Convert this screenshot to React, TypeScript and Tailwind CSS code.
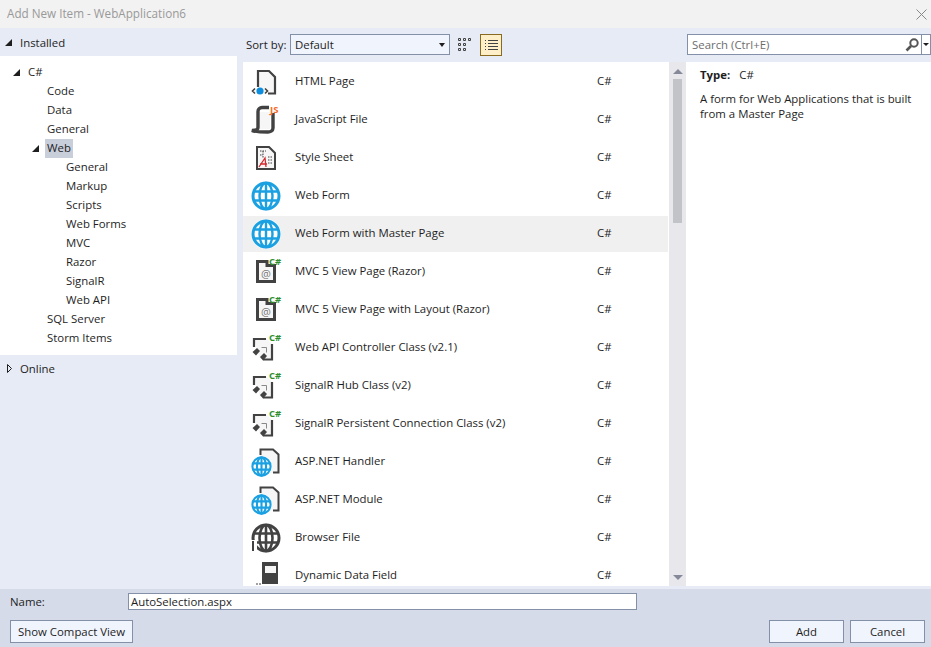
const font = "font-['Open_Sans','Liberation_Sans',sans-serif]";

function GlobeShape() {
  return (
    <>
      <circle cx="15" cy="15" r="15" fill="#fff" stroke="none" />
      <circle cx="15" cy="15" r="13" fill="#fff" strokeWidth="3" />
      <ellipse cx="15" cy="15" rx="6.5" ry="13" />
      <path d="M15 2v26M2.500 10.500h25M2.500 19.500h25" />
    </>
  );
}

function Globe() {
  return (
    <svg width="30" height="30" viewBox="0 0 30 30" fill="none" stroke="#1ba1e2" strokeWidth="2.400">
      <GlobeShape />
    </svg>
  );
}

function CSharp() {
  return (
    <text x="18" y="8" fontSize="9.500" fontWeight="700" fill="#2f8f2f" fontFamily="Open Sans, sans-serif">
      C#
    </text>
  );
}

function ItemIcon({ kind }: { kind: string }) {
  if (kind === "web") return <Globe />;
  if (kind === "browser")
    return (
      <svg width="30" height="30" viewBox="0 0 30 30" fill="none" stroke="#424242" strokeWidth="2.600">
        <GlobeShape />
        <path d="M0 17h6v13H0z" fill="#fff" stroke="none" />
        <path d="M2 18v10" strokeWidth="2" />
      </svg>
    );
  if (kind === "html")
    return (
      <svg width="30" height="30" viewBox="0 0 30 30">
        <path d="M7 4h11l6 6v16H7z" fill="#f6f6f6" />
        <path d="M7 20V4h11l6 6v16.500h-7" fill="none" stroke="#424242" strokeWidth="2.200" />
        <path d="M4 21.500 1.500 24 4 26.500M14 21.500l2.500 2.500-2.500 2.500" fill="none" stroke="#424242" strokeWidth="1.600" />
        <circle cx="9" cy="24" r="3.600" fill="#0d8ddb" />
      </svg>
    );
  if (kind === "js")
    return (
      <svg width="34" height="30" viewBox="0 0 34 30" className="overflow-visible">
        <path d="M7 7h12v17H7z" fill="#f6f6f6" />
        <path
          d="M18 2.500H11a4 4 0 0 0-4 4v16c0 2-2 3-6 3 3 1.500 14 1.500 16 1.500s5-1 5-4V8"
          fill="none"
          stroke="#424242"
          strokeWidth="3.400"
        />
        <text x="19" y="8" fontSize="9.500" fontWeight="700" fill="#f26c2a" fontFamily="Open Sans, sans-serif">
          JS
        </text>
      </svg>
    );
  if (kind === "css")
    return (
      <svg width="30" height="30" viewBox="0 0 30 30">
        <path d="M6 4h12l6 6v16H6z" fill="#f6f6f6" stroke="#424242" strokeWidth="2" />
        <path d="M9 8h6M12 8v7M9 12h3M17 14h5M17 17h5M17 20h5" stroke="#424242" strokeWidth="1" strokeDasharray="1.500 1" />
        <path d="M8 24 14 15l1 9M9 21h7" fill="none" stroke="#d4272e" strokeWidth="1.300" />
      </svg>
    );
  if (kind === "razor")
    return (
      <svg width="34" height="30" viewBox="0 0 34 30" className="overflow-visible">
        <path d="M6.500 4.500H16v4h7.500v16h-17z" fill="#f6f6f6" stroke="#424242" strokeWidth="3" />
        <text x="10" y="21" fontSize="11" fill="#777" fontFamily="Open Sans, sans-serif">
          @
        </text>
        <CSharp />
      </svg>
    );
  if (kind === "class")
    return (
      <svg width="34" height="30" viewBox="0 0 34 30" className="overflow-visible">
        <path d="M3 6h13l5 5v15H9" fill="#f6f6f6" />
        <path d="M3 14V6h12M21 11v15.500H12" fill="none" stroke="#424242" strokeWidth="2.200" />
        <path d="M1.500 19 6 15l3 3-4 4.500zM9 24l4-4 3 3-4 4.500z" fill="#424242" />
        <path d="M10.500 14.500h5v5" fill="none" stroke="#888" strokeWidth="1" />
        <CSharp />
      </svg>
    );
  if (kind === "handler")
    return (
      <svg width="30" height="30" viewBox="0 0 30 30">
        <path d="M9 2h13l5 5v19H9z" fill="#f6f6f6" />
        <path d="M9.500 8V2.500H22l5.500 5V25.500H22" fill="none" stroke="#424242" strokeWidth="2" />
        <svg x="0" y="9" width="21" height="21" viewBox="0 0 30 30" fill="none" stroke="#1ba1e2" strokeWidth="3">
          <GlobeShape />
        </svg>
      </svg>
    );
  return (
    <svg width="30" height="30" viewBox="0 0 30 30">
      <path d="M11 1h16v22H11z" fill="#424242" />
      <path d="M14 5h11v7H14z" fill="#f6f6f6" />
      <path d="M5 23h6" stroke="#424242" strokeWidth="1" strokeDasharray="2 1" />
    </svg>
  );
}

const items = [
  ["HTML Page", "html"],
  ["JavaScript File", "js"],
  ["Style Sheet", "css"],
  ["Web Form", "web"],
  ["Web Form with Master Page", "web"],
  ["MVC 5 View Page (Razor)", "razor"],
  ["MVC 5 View Page with Layout (Razor)", "razor"],
  ["Web API Controller Class (v2.1)", "class"],
  ["SignalR Hub Class (v2)", "class"],
  ["SignalR Persistent Connection Class (v2)", "class"],
  ["ASP.NET Handler", "handler"],
  ["ASP.NET Module", "handler"],
  ["Browser File", "browser"],
  ["Dynamic Data Field", "data"],
];

const tree = [
  ["C#", 1, true],
  ["Code", 2, false],
  ["Data", 2, false],
  ["General", 2, false],
  ["Web", 2, true],
  ["General", 3, false],
  ["Markup", 3, false],
  ["Scripts", 3, false],
  ["Web Forms", 3, false],
  ["MVC", 3, false],
  ["Razor", 3, false],
  ["SignalR", 3, false],
  ["Web API", 3, false],
  ["SQL Server", 2, false],
  ["Storm Items", 2, false],
] as const;

function Arrow() {
  return <span className="w-0 h-0 border-l-[7px] border-l-transparent border-b-[7px] border-b-[#1e1e1e]" />;
}

export default function App() {
  return (
    <div className={`w-[931px] h-[647px] overflow-hidden flex flex-col bg-[#d6dbe9] text-[11.4px] text-[#1e1e1e] ${font}`}>
      <div className="h-[28px] bg-[#f2f2f2] flex items-center justify-between pl-[7px] pr-[4px] text-[11.7px] text-[#999]">
        <span>Add New Item - WebApplication6</span>
        <svg width="11" height="11" viewBox="0 0 11 11" stroke="#888" strokeWidth="1">
          <path d="M.5.5l10 10M10.500.5l-10 10" />
        </svg>
      </div>

      <div className="flex-1 min-h-0 flex bg-[#e6ebf5]">
        <div className="w-[237px] flex flex-col">
          <div className="h-[28px] flex items-center pl-[5px] gap-[8px]">
            <Arrow />
            <span className="pt-[1px]">Installed</span>
          </div>
          <div className="h-[299px] bg-white pt-[7px]">
            {tree.map(([label, level, open], i) => (
              <div key={i} className="h-[19px] flex items-center">
                <span className="flex justify-end shrink-0" style={{ width: level * 19 + 1 }}>
                  {open && <Arrow />}
                </span>
                <span className={`px-[2px] h-[19px] leading-[17px] ml-[6px] ${label === "Web" ? "bg-[#c9cedb]" : ""}`}>{label}</span>
              </div>
            ))}
          </div>
          <div className="h-[27px] flex items-center pl-[7px] gap-[8px]">
            <svg width="5" height="9" viewBox="0 0 5 9" fill="none" stroke="#1e1e1e" strokeWidth="1">
              <path d="M.5.500v8l4-4z" />
            </svg>
            <span>Online</span>
          </div>
        </div>

        <div className="flex-1 min-w-0 flex flex-col">
          <div className="h-[34px] flex items-center justify-between pl-[9px] pb-[1px]">
            <div className="flex items-center">
              <span className="w-[44px] pt-[1px]">Sort by:</span>
              <div className="w-[160px] h-[21px] border border-[#8490a8] bg-[#f0f4fc] flex items-center justify-between pl-[4px] pr-[4px]">
                <span className="pt-[1px]">Default</span>
                <span className="w-0 h-0 border-x-[3.5px] border-x-transparent border-t-[4px] border-t-[#1e1e1e]" />
              </div>
              <div className="w-[30px] h-[22px] flex items-center justify-center">
                <svg width="14" height="14" viewBox="0 0 14 14" fill="none" stroke="#424242" strokeWidth="1">
                  <path d="M.5.5h2v2h-2zM5.500.5h2v2h-2zM10.500.5h2v2h-2zM.5 5.500h2v2h-2zM5.500 5.500h2v2h-2zM.5 10.500h2v2h-2zM5.500 10.500h2v2h-2z" />
                </svg>
              </div>
              <div className="w-[22px] h-[22px] bg-[#ffefc9] border border-[#8a6a1e] flex items-center justify-center">
                <svg width="13" height="12" viewBox="0 0 13 12" fill="none" stroke="#424242" strokeWidth="1">
                  <path d="M0 1.500h1M3 1.500h10M0 4.500h1M3 4.500h10M0 7.500h1M3 7.500h10M0 10.500h1M3 10.500h10" />
                </svg>
              </div>
            </div>
            <div className="w-[244px] h-[21px] border border-[#8490a8] bg-white flex items-center pl-[4px] text-[#6d6d6d]">
              <span className="flex-1 pt-[1px]">Search (Ctrl+E)</span>
              <svg width="14" height="14" viewBox="0 0 14 14" fill="none" className="mr-[2px]">
                <circle cx="9" cy="5" r="3.700" stroke="#555" strokeWidth="2" />
                <path d="M6 8l-4.500 4.500" stroke="#555" strokeWidth="2.600" />
              </svg>
              <span className="w-[9px] h-full border-l border-[#8490a8] flex items-center justify-center">
                <span className="w-0 h-0 border-x-[3px] border-x-transparent border-t-[3px] border-t-[#1e1e1e]" />
              </span>
            </div>
          </div>

          <div className="flex-1 min-h-0 flex bg-white ml-[6px]">
            <div className="w-[425px] shrink-0 h-full overflow-hidden pt-[2px]">
              {items.map(([name, kind], i) => (
                <div key={i} className={`h-[36px] mb-[2px] flex items-center ${i === 4 ? "bg-[#f0f0f0]" : ""}`}>
                  <span className="w-[52px] pl-[8px] shrink-0 flex items-center">
                    <ItemIcon kind={kind} />
                  </span>
                  <span className="flex-1 pb-[2px]">{name}</span>
                  <span className="w-[71px] pb-[2px]">C#</span>
                </div>
              ))}
            </div>
            <div className="w-[17px] shrink-0 ml-[1px] h-full bg-[#e8e8ec] flex flex-col items-center pt-[7px] pb-[6px]">
              <span className="w-0 h-0 border-x-[5px] border-x-transparent border-b-[5px] border-b-[#868999]" />
              <div className="w-[9px] h-[144px] bg-[#c2c3c9] mt-[5px] flex-none" />
              <span className="mt-auto w-0 h-0 border-x-[5px] border-x-transparent border-t-[5px] border-t-[#868999]" />
            </div>
            <div className="flex-1 ml-[2px] pl-[12px] pt-[4px]">
              <div className="h-[18px] flex items-center gap-[9px]">
                <span className="font-bold">Type:</span>
                <span>C#</span>
              </div>
              <p className="mt-[7px] leading-[15px] w-[225px]">A form for Web Applications that is built from a Master Page</p>
            </div>
          </div>
        </div>
      </div>

      <div className="h-[61px] shrink-0 border-t-[3px] border-t-[#e6ebf5] bg-[#d6dbe9] px-[10px]">
        <div className="flex items-center h-[25px]">
          <span className="w-[118px] pt-[1px]">Name:</span>
          <div className="w-[509px] h-[17px] bg-white border border-[#8490a8] flex items-center pl-[2px] pt-[1px]">AutoSelection.aspx</div>
        </div>
        <div className="flex items-center justify-between mt-[6px]">
          <button className="w-[123px] h-[23px] border border-[#8490a8] bg-[#f0f4fc]">Show Compact View</button>
          <div className="flex gap-[6px] mr-[-4px]">
            <button className="w-[75px] h-[23px] border border-[#8490a8] bg-[#f0f4fc]">Add</button>
            <button className="w-[75px] h-[23px] border border-[#8490a8] bg-[#f0f4fc]">Cancel</button>
          </div>
        </div>
      </div>
    </div>
  );
}
